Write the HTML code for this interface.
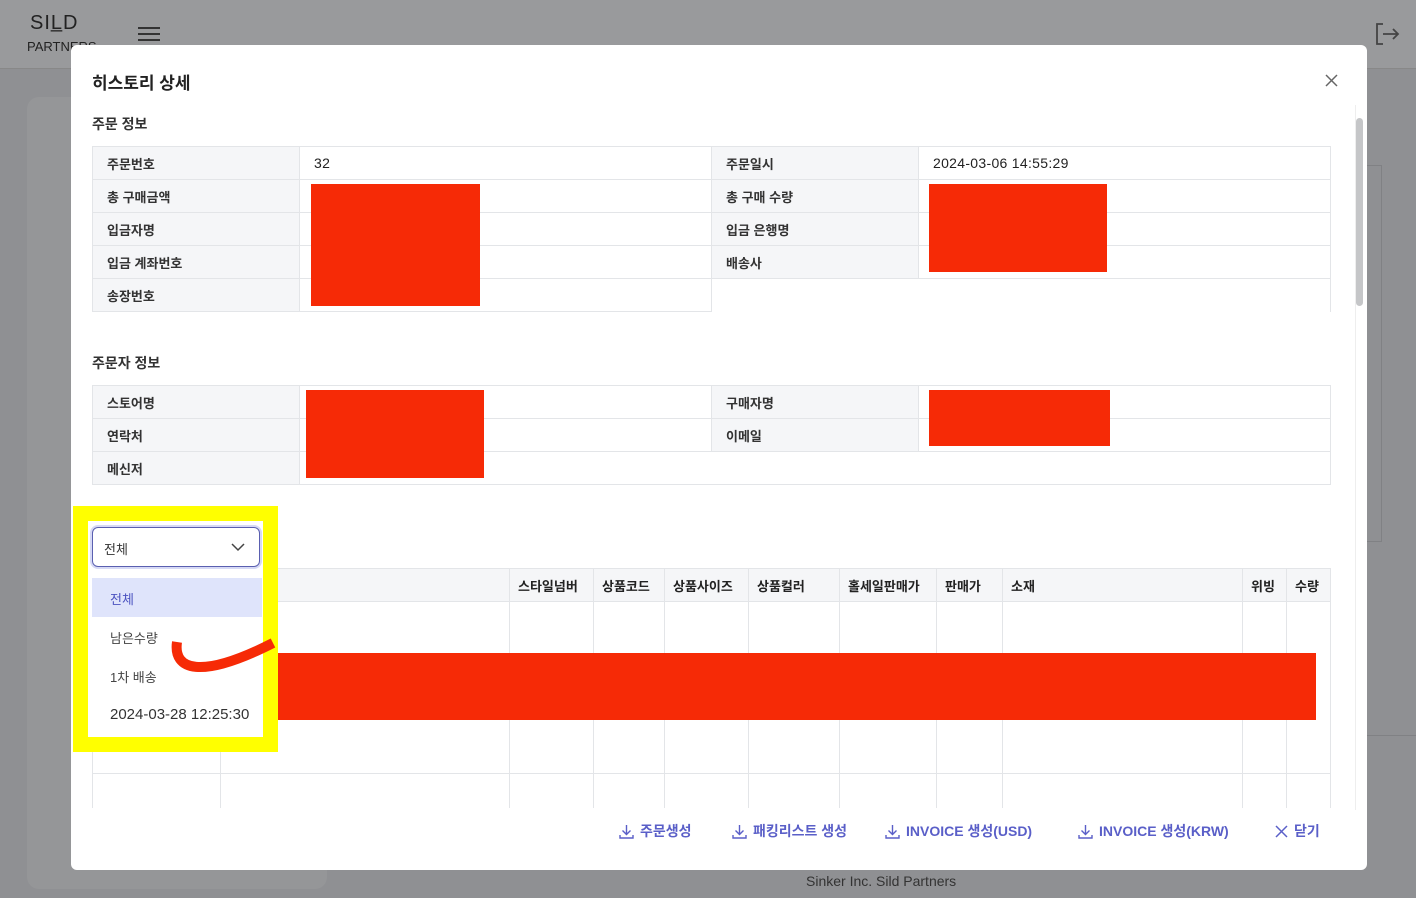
<!DOCTYPE html><html><head><meta charset="utf-8"><style>
*{box-sizing:border-box;margin:0;padding:0}
body{width:1416px;height:898px;overflow:hidden;background:#8f9093;font-family:"Liberation Sans","Noto Sans CJK KR",sans-serif;position:relative;color:#222}
.hdr{position:absolute;left:0;top:0;width:1416px;height:69px;background:#999a9c;border-bottom:1px solid #888}
.abs{position:absolute}
.modal{position:absolute;left:71px;top:45px;width:1296px;height:825px;background:#fff;border-radius:6px}
table{border-collapse:collapse;position:absolute;font-size:13px}
td{border:1px solid #e3e5e8;height:33px;padding:0 14px}
td.v{font-size:14px;letter-spacing:0.3px}
td.l{background:#f5f6f8;font-weight:bold;color:#333}
.red{position:absolute;background:#f62a06}
.pt td,.pt th{border:1px solid #e3e5e8;font-size:13px;padding:0 8px;text-align:left}
.pt th{background:#f5f6f8;height:33px;font-weight:bold}
.btn{position:absolute;top:821px;color:#5a5fc8;font-weight:bold;font-size:14px;display:flex;align-items:center;gap:6px}
.btn svg{flex:none}
</style></head><body>
<div class="hdr"></div>
<div class="abs" style="left:30px;top:12px;font-size:20px;letter-spacing:1px;color:#222">SIL̲D</div>
<div class="abs" style="left:27px;top:39px;font-size:13px;color:#222">PARTNERS</div>
<div class="abs" style="left:138px;top:27px;width:22px;height:2px;background:#333;box-shadow:0 6px 0 #333,0 12px 0 #333"></div>
<svg class="abs" style="left:1374px;top:22px" width="26" height="24"><path d="M9 2H3v20h6M9 12h15M19 7l5 5-5 5" stroke="#444" stroke-width="1.8" fill="none"/></svg>
<div class="abs" style="left:27px;top:97px;width:300px;height:792px;background:#959698;border-radius:12px"></div>
<div class="abs" style="left:1340px;top:165px;width:42px;height:377px;border:1px solid #808184"></div>
<div class="abs" style="left:1340px;top:735px;width:76px;height:1px;background:#808184"></div>
<div class="abs" style="left:806px;top:873px;font-size:14px;color:#333">Sinker Inc. Sild Partners</div>
<div class="modal">
<div class="abs" style="left:21px;top:24px;font-size:17px;font-weight:bold">히스토리 상세</div>
<svg class="abs" style="left:1254px;top:29px" width="13" height="13"><path d="M1 1l11 11M12 1L1 12" stroke="#666" stroke-width="1.5"/></svg>
<div class="abs" style="left:21px;top:69px;font-size:14px;font-weight:bold;color:#333">주문 정보</div>
<div class="abs" style="left:1285px;top:73px;width:7px;height:188px;background:#c5c6c8;border-radius:4px"></div>
<div class="abs" style="left:1284px;top:60px;width:1px;height:705px;background:#eee"></div>
</div>
<table style="left:92px;top:146px;width:1239px">
<tr><td class="l" style="width:207px">주문번호</td><td class="v" style="width:412px">32</td><td class="l" style="width:207px">주문일시</td><td class="v">2024-03-06 14:55:29</td></tr>
<tr><td class="l">총 구매금액</td><td></td><td class="l">총 구매 수량</td><td></td></tr>
<tr><td class="l">입금자명</td><td></td><td class="l">입금 은행명</td><td></td></tr>
<tr><td class="l">입금 계좌번호</td><td></td><td class="l">배송사</td><td></td></tr>
<tr><td class="l">송장번호</td><td></td><td style="border:none;border-left:1px solid #e3e5e8"></td><td style="border:none;border-right:1px solid #e3e5e8"></td></tr>
</table>
<div class="red" style="left:311px;top:184px;width:169px;height:122px"></div>
<div class="red" style="left:929px;top:184px;width:178px;height:88px"></div>
<div class="abs" style="left:92px;top:353px;font-size:14px;font-weight:bold;color:#333">주문자 정보</div>
<table style="left:92px;top:385px;width:1239px">
<tr><td class="l" style="width:207px">스토어명</td><td style="width:412px"></td><td class="l" style="width:207px">구매자명</td><td></td></tr>
<tr><td class="l">연락처</td><td></td><td class="l">이메일</td><td></td></tr>
<tr><td class="l">메신저</td><td style="border-right:none"></td><td style="border-left:none;border-right:none"></td><td style="border-left:none"></td></tr>
</table>
<div class="red" style="left:306px;top:390px;width:178px;height:88px"></div>
<div class="red" style="left:929px;top:390px;width:181px;height:56px"></div>
<div class="abs" style="left:92px;top:568px;width:1239px;height:240px;overflow:hidden">
<table class="pt" style="left:0;top:0;width:1239px">
<tr><th style="width:128px"></th><th style="width:289px"></th><th style="width:84px">스타일넘버</th><th style="width:71px">상품코드</th><th style="width:84px">상품사이즈</th><th style="width:91px">상품컬러</th><th style="width:97px">홀세일판매가</th><th style="width:66px">판매가</th><th style="width:240px">소재</th><th style="width:44px">위빙</th><th>수량</th></tr>
<tr><td style="height:172px"></td><td></td><td></td><td></td><td></td><td></td><td></td><td></td><td></td><td></td><td></td></tr>
<tr><td style="height:86px"></td><td></td><td></td><td></td><td></td><td></td><td></td><td></td><td></td><td></td><td></td></tr>
</table></div>
<div class="red" style="left:270px;top:653px;width:1046px;height:67px"></div>
<div class="abs" style="left:73px;top:506px;width:205px;height:246px;background:#ffff00"></div>
<div class="abs" style="left:88px;top:521px;width:175px;height:216px;background:#fff"></div>
<div class="abs" style="left:92px;top:527px;width:168px;height:40px;border:1px solid #5a5fb0;border-radius:6px;box-shadow:0 0 0 2px #d6d9f5;font-size:13px;padding:11px 11px;color:#333">전체<svg style="position:absolute;right:14px;top:14px" width="14" height="10"><path d="M1 2l6 6 6-6" stroke="#444" stroke-width="1.5" fill="none"/></svg></div>
<div class="abs" style="left:92px;top:578px;width:170px;height:39px;background:#dfe4fb"></div>
<div class="abs" style="left:110px;top:589px;font-size:13px;color:#4b52c0">전체</div>
<div class="abs" style="left:110px;top:628px;font-size:13px;color:#444">남은수량</div>
<div class="abs" style="left:110px;top:667px;font-size:13px;color:#444">1차 배송</div>
<div class="abs" style="left:110px;top:706px;font-size:15px;color:#333">2024-03-28 12:25:30</div>
<svg class="abs" style="left:165px;top:635px" width="115" height="50"><path d="M12 7 C8 35,35 45,108 8" stroke="#f62a06" stroke-width="10" fill="none"/></svg>
<div class="btn" style="left:619px"><svg width="15" height="15"><path d="M7.5 1v9M3.5 6.5l4 4 4-4M1 11v3h13v-3" stroke="#5a5fc8" stroke-width="1.4" fill="none"/></svg>주문생성</div>
<div class="btn" style="left:732px"><svg width="15" height="15"><path d="M7.5 1v9M3.5 6.5l4 4 4-4M1 11v3h13v-3" stroke="#5a5fc8" stroke-width="1.4" fill="none"/></svg>패킹리스트 생성</div>
<div class="btn" style="left:885px"><svg width="15" height="15"><path d="M7.5 1v9M3.5 6.5l4 4 4-4M1 11v3h13v-3" stroke="#5a5fc8" stroke-width="1.4" fill="none"/></svg>INVOICE 생성(USD)</div>
<div class="btn" style="left:1078px"><svg width="15" height="15"><path d="M7.5 1v9M3.5 6.5l4 4 4-4M1 11v3h13v-3" stroke="#5a5fc8" stroke-width="1.4" fill="none"/></svg>INVOICE 생성(KRW)</div>
<div class="btn" style="left:1275px"><svg width="13" height="13"><path d="M1 1l11 11M12 1L1 12" stroke="#5a5fc8" stroke-width="1.5"/></svg>닫기</div>
</body></html>
